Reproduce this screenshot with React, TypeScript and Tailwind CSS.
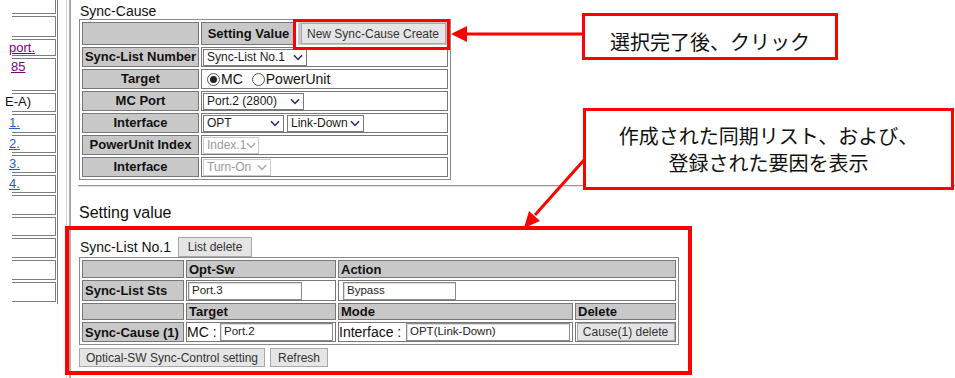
import clsx from "clsx";
import type { ReactNode } from "react";

const sans = "font-['Liberation_Sans',Arial,sans-serif]";
const jp = "font-['Noto_Sans_CJK_JP',sans-serif]";

const Chevron = ({ muted }: { muted?: boolean }) => (
  <svg width="10" height="7" viewBox="0 0 10 7" className="shrink-0">
    <path d="M1 1.2 L5 5.4 L9 1.2" fill="none" stroke={muted ? "#a3abbb" : "#1c2f5a"} strokeWidth="1.5" />
  </svg>
);

const Select = ({ label, className, muted }: { label: string; className: string; muted?: boolean }) => (
  <span
    className={clsx(
      "flex h-[17px] shrink-0 items-center justify-between px-[3px] text-[12px] leading-none",
      muted ? "border border-[#c9c9c9] bg-white text-[#9a9a9a]" : "border border-[#7a7a7a] bg-white text-[#1a1a1a]",
      className
    )}
  >
    <span>{label}</span>
    <Chevron muted={muted} />
  </span>
);

const Radio = ({ checked }: { checked?: boolean }) => (
  <span className="flex h-[13px] w-[13px] shrink-0 items-center justify-center rounded-full border border-[#555] bg-white">
    {checked && <span className="h-[7px] w-[7px] rounded-full bg-[#222]" />}
  </span>
);

const Btn = ({ children, className }: { children: ReactNode; className: string }) => (
  <button
    className={clsx(
      "inline-flex shrink-0 items-center justify-center whitespace-nowrap border border-[#a8a8a8] bg-[#e5e5e5] text-[12px] leading-none text-[#333]",
      className
    )}
  >
    {children}
  </button>
);

const Field = ({ value, className }: { value: string; className: string }) => (
  <span
    className={clsx(
      "flex h-[18px] shrink-0 items-center border border-[#8a8a8a] bg-white pl-[3px] text-[11.5px] leading-none text-[#222] shadow-[inset_1px_1px_0_#dcdcdc]",
      className
    )}
  >
    {value}
  </span>
);

const LeftNav = () => {
  const cells: { h: string; content?: ReactNode }[] = [
    { h: "h-[14px]" },
    { h: "h-[21px]" },
    { h: "h-[17px]", content: <span className="-ml-[3px] text-[#800080] underline">port.</span> },
    { h: "h-[33px]", content: <span className="-ml-[1px] text-[#800080] underline">85</span> },
    { h: "h-[19px]", content: <span className="-ml-[7px] text-[#111]">E-A)</span> },
    { h: "h-[19px]", content: <span className="-ml-[3px] text-[#1a5fd0] underline">1.</span> },
    { h: "h-[18px]", content: <span className="-ml-[3px] text-[#1a5fd0] underline">2.</span> },
    { h: "h-[18px]", content: <span className="-ml-[3px] text-[#1a5fd0] underline">3.</span> },
    { h: "h-[18px]", content: <span className="-ml-[3px] text-[#1a5fd0] underline">4.</span> },
    { h: "h-[20px]" },
    { h: "h-[19px]" },
    { h: "h-[20px]" },
    { h: "h-[20px]" },
    { h: "h-[20px]" },
  ];
  return (
    <div className="flex h-[304px] w-[58px] shrink-0 flex-col gap-[2px] border-r border-[#7a7a7a] pl-[12px] text-[13px]">
      {cells.map((c, i) => (
        <div
          key={i}
          className={clsx(
            "flex w-[44px] items-start border border-l-0 border-[#7d7d7d] leading-[15px]",
            c.h,
            i === 0 && "border-t-0"
          )}
        >
          {c.content}
        </div>
      ))}
    </div>
  );
};

const th1 = "h-[20px] whitespace-nowrap border border-[#777] bg-[#c8c8c8] p-0 text-center text-[13px] leading-[16px] font-bold text-[#111]";
const td1 = "h-[20px] border border-[#777] bg-white p-0 pl-[1px] text-left leading-[16px]";
const th2 = "whitespace-nowrap border border-[#777] bg-[#c8c8c8] p-0 pl-[2px] text-left text-[13px] leading-[15px] font-bold text-[#111]";
const td2 = "border border-[#777] bg-white p-0 text-left text-[14px] leading-[15px] text-[#111]";

const SyncCauseTable = () => (
  <table className="w-[372px] table-fixed border-separate border-spacing-[2px] border border-[#8a8a8a]">
    <colgroup>
      <col className="w-[117px]" />
      <col className="w-[95px]" />
      <col className="w-[150px]" />
    </colgroup>
    <tbody>
      <tr>
        <td className={clsx(th1, "h-[23px]")}></td>
        <td className={clsx(th1, "h-[23px]")}>Setting Value</td>
        <td className="h-[23px] bg-[#c8c8c8] p-0 text-center leading-none">
          <Btn className="h-[21px] w-[145px] text-[11.5px]">New Sync-Cause Create</Btn>
        </td>
      </tr>
      <tr>
        <td className={th1}>Sync-List Number</td>
        <td className={td1} colSpan={2}>
          <div className="flex">
            <Select label="Sync-List No.1" className="w-[104px]" />
          </div>
        </td>
      </tr>
      <tr>
        <td className={th1}>Target</td>
        <td className={td1} colSpan={2}>
          <div className="flex items-center pl-[4px] text-[14px] text-[#111]">
            <Radio checked />
            <span className="ml-[1px]">MC</span>
            <span className="ml-[9px]">
              <Radio />
            </span>
            <span className="ml-[1px]">PowerUnit</span>
          </div>
        </td>
      </tr>
      <tr>
        <td className={th1}>MC Port</td>
        <td className={td1} colSpan={2}>
          <div className="flex">
            <Select label="Port.2 (2800)" className="w-[101px]" />
          </div>
        </td>
      </tr>
      <tr>
        <td className={th1}>Interface</td>
        <td className={td1} colSpan={2}>
          <div className="flex gap-[3px]">
            <Select label="OPT" className="w-[81px]" />
            <Select label="Link-Down" className="w-[77px]" />
          </div>
        </td>
      </tr>
      <tr>
        <td className={th1}>PowerUnit Index</td>
        <td className={td1} colSpan={2}>
          <div className="flex">
            <Select label="Index.1" className="w-[56px]" muted />
          </div>
        </td>
      </tr>
      <tr>
        <td className={th1}>Interface</td>
        <td className={td1} colSpan={2}>
          <div className="flex">
            <Select label="Turn-On" className="w-[68px]" muted />
          </div>
        </td>
      </tr>
    </tbody>
  </table>
);

const SyncListTable = () => (
  <table className="w-[600px] table-fixed border-separate border-spacing-[2px] border border-[#8a8a8a]">
    <colgroup>
      <col className="w-[102px]" />
      <col className="w-[150px]" />
      <col className="w-[235px]" />
      <col className="w-[101px]" />
    </colgroup>
    <tbody>
      <tr>
        <td className={clsx(th2, "h-[18px]")}></td>
        <td className={clsx(th2, "h-[18px]")}>Opt-Sw</td>
        <td className={clsx(th2, "h-[18px]")} colSpan={2}>
          Action
        </td>
      </tr>
      <tr>
        <td className={clsx(th2, "h-[21px]")}>Sync-List Sts</td>
        <td className={clsx(td2, "h-[21px] pl-[1px]")}>
          <div className="flex">
            <Field value="Port.3" className="w-[114px]" />
          </div>
        </td>
        <td className={clsx(td2, "h-[21px] pl-[4px]")} colSpan={2}>
          <div className="flex">
            <Field value="Bypass" className="w-[113px]" />
          </div>
        </td>
      </tr>
      <tr>
        <td className={clsx(th2, "h-[17px]")}></td>
        <td className={clsx(th2, "h-[17px]")}>Target</td>
        <td className={clsx(th2, "h-[17px]")}>Mode</td>
        <td className={clsx(th2, "h-[17px]")}>Delete</td>
      </tr>
      <tr>
        <td className={clsx(th2, "h-[20px]")}>Sync-Cause (1)</td>
        <td className={clsx(td2, "h-[20px]")}>
          <div className="flex items-center">
            <span className="w-[33px] whitespace-pre">MC : </span>
            <Field value="Port.2" className="w-[113px]" />
          </div>
        </td>
        <td className={clsx(td2, "h-[20px]")}>
          <div className="flex items-center">
            <span className="w-[67px] whitespace-pre">Interface : </span>
            <Field value="OPT(Link-Down)" className="w-[164px]" />
          </div>
        </td>
        <td className={clsx(td2, "h-[20px]")}>
          <div className="flex justify-center">
            <Btn className="h-[18px] w-[98px] text-[11.5px]">Cause(1) delete</Btn>
          </div>
        </td>
      </tr>
    </tbody>
  </table>
);

const Annotations = () => (
  <>
    <div className="pointer-events-none absolute left-[293px] top-[19px] h-[31px] w-[157px] border-[3px] border-[#ff0000]" />
    <div className="pointer-events-none absolute left-[65px] top-[226px] h-[149px] w-[627px] border-[4px] border-[#ff0000]" />
    <svg className="pointer-events-none absolute left-0 top-0" width="955" height="378">
      <line x1="464" y1="34" x2="584" y2="34" stroke="#ff0000" strokeWidth="3" />
      <polygon points="451,34 467,26 467,42" fill="#ff0000" />
      <line x1="584" y1="160" x2="535" y2="215" stroke="#ff0000" strokeWidth="3" />
      <polygon points="524,228 540,221 529,211" fill="#ff0000" />
    </svg>
    <div
      className={clsx(
        "absolute left-[582px] top-[13px] flex h-[47px] w-[256px] items-center justify-center border-[3px] border-[#ff0000] bg-white pt-[10px] text-[20px] text-[#111]",
        jp
      )}
    >
      選択完了後、クリック
    </div>
    <div
      className={clsx(
        "absolute left-[583px] top-[108px] flex h-[82px] w-[371px] flex-col items-center justify-center border-[3px] border-[#ff0000] bg-white text-[20px] leading-[27px] text-[#111]",
        jp
      )}
    >
      <span>作成された同期リスト、および、</span>
      <span>登録された要因を表示</span>
    </div>
  </>
);

export default function App() {
  return (
    <div className={clsx("relative flex h-[378px] w-[955px] overflow-hidden bg-white text-[#111]", sans)}>
      <LeftNav />
      <div className="ml-[8px] flex h-[378px] w-[13px] shrink-0 border-l border-[#d2d2d2]">
        <div className="ml-[2px] h-full w-[2px] bg-[#a8a8a8]" />
      </div>
      <main className="flex flex-1 flex-col pt-[3px]">
        <div className="h-[16px] pl-[1px] text-[14px] leading-[16px]">Sync-Cause</div>
        <SyncCauseTable />
        <div className="-ml-[1px] mt-[5px] h-[2px] shrink-0 border-t border-b border-t-[#999] border-b-[#e2e2e2]" />
        <div className="mt-[16px] h-[20px] text-[16px] leading-[20px]">Setting value</div>
        <div className="mt-[14px] flex h-[20px] items-center">
          <span className="w-[99px] pl-[1px] text-[14px]">Sync-List No.1</span>
          <Btn className="h-[20px] w-[74px]">List delete</Btn>
        </div>
        <SyncListTable />
        <div className="mt-[3px] flex gap-[5px]">
          <Btn className="h-[19px] w-[186px] text-[11.5px]">Optical-SW Sync-Control setting</Btn>
          <Btn className="h-[19px] w-[58px] text-[11.5px]">Refresh</Btn>
        </div>
        <div className="-ml-[8px] mt-[7px] h-[1px] w-[620px] shrink-0 bg-[#8a8a8a]" />
      </main>
      <Annotations />
    </div>
  );
}
